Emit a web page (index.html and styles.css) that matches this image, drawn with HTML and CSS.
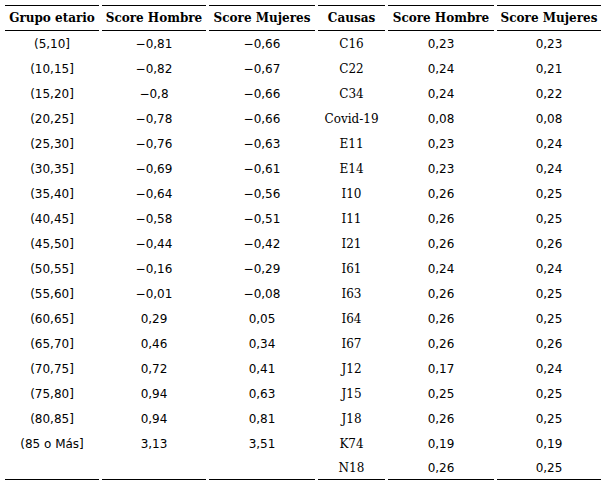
FILE: index.html
```html
<!DOCTYPE html>
<html>
<head>
<meta charset="utf-8">
<link rel="stylesheet" href="styles.css">
</head>
<body>
<table class="tbl">
<colgroup>
<col class="c1"><col class="c2"><col class="c3"><col class="c4"><col class="c5"><col class="c6">
</colgroup>
<thead>
<tr><th>Grupo etario</th><th>Score Hombre</th><th>Score Mujeres</th><th>Causas</th><th>Score Hombre</th><th>Score Mujeres</th></tr>
</thead>
<tbody>
<tr><td>(5,10]</td><td>−0,81</td><td>−0,66</td><td class="cause">C16</td><td>0,23</td><td>0,23</td></tr>
<tr><td>(10,15]</td><td>−0,82</td><td>−0,67</td><td class="cause">C22</td><td>0,24</td><td>0,21</td></tr>
<tr><td>(15,20]</td><td>−0,8</td><td>−0,66</td><td class="cause">C34</td><td>0,24</td><td>0,22</td></tr>
<tr><td>(20,25]</td><td>−0,78</td><td>−0,66</td><td class="cause">Covid-19</td><td>0,08</td><td>0,08</td></tr>
<tr><td>(25,30]</td><td>−0,76</td><td>−0,63</td><td class="cause">E11</td><td>0,23</td><td>0,24</td></tr>
<tr><td>(30,35]</td><td>−0,69</td><td>−0,61</td><td class="cause">E14</td><td>0,23</td><td>0,24</td></tr>
<tr><td>(35,40]</td><td>−0,64</td><td>−0,56</td><td class="cause">I10</td><td>0,26</td><td>0,25</td></tr>
<tr><td>(40,45]</td><td>−0,58</td><td>−0,51</td><td class="cause">I11</td><td>0,26</td><td>0,25</td></tr>
<tr><td>(45,50]</td><td>−0,44</td><td>−0,42</td><td class="cause">I21</td><td>0,26</td><td>0,26</td></tr>
<tr><td>(50,55]</td><td>−0,16</td><td>−0,29</td><td class="cause">I61</td><td>0,24</td><td>0,24</td></tr>
<tr><td>(55,60]</td><td>−0,01</td><td>−0,08</td><td class="cause">I63</td><td>0,26</td><td>0,25</td></tr>
<tr><td>(60,65]</td><td>0,29</td><td>0,05</td><td class="cause">I64</td><td>0,26</td><td>0,25</td></tr>
<tr><td>(65,70]</td><td>0,46</td><td>0,34</td><td class="cause">I67</td><td>0,26</td><td>0,26</td></tr>
<tr><td>(70,75]</td><td>0,72</td><td>0,41</td><td class="cause">J12</td><td>0,17</td><td>0,24</td></tr>
<tr><td>(75,80]</td><td>0,94</td><td>0,63</td><td class="cause">J15</td><td>0,25</td><td>0,25</td></tr>
<tr><td>(80,85]</td><td>0,94</td><td>0,81</td><td class="cause">J18</td><td>0,26</td><td>0,25</td></tr>
<tr><td>(85 o Más]</td><td>3,13</td><td>3,51</td><td class="cause">K74</td><td>0,19</td><td>0,19</td></tr>
<tr class="last"><td></td><td></td><td></td><td class="cause">N18</td><td>0,26</td><td>0,25</td></tr>
</tbody>
</table>
</body>
</html>
```

FILE: styles.css
```css
html, body {
  margin: 0;
  padding: 0;
  background: #ffffff;
}
body {
  padding: 5px 0 0 2px;
}
.tbl {
  border-collapse: separate;
  border-spacing: 3px 0;
  color: #000;
  font-family: "DejaVu Sans", Verdana, sans-serif;
  font-size: 12px;
}
.c1 { width: 94px; }
.c2 { width: 104px; }
.c3 { width: 106px; }
.c4 { width: 67px; }
.c5 { width: 106px; }
.c6 { width: 104px; }
.tbl th {
  font-family: "DejaVu Serif", "Liberation Serif", serif;
  font-weight: bold;
  font-size: 12px;
  height: 24px;
  padding: 0;
  text-align: center;
  border-top: 1px solid #000;
  border-bottom: 1px solid #000;
}
.tbl td {
  height: 25px;
  padding: 0;
  text-align: center;
  vertical-align: middle;
}
.tbl td.cause {
  font-family: "DejaVu Serif", "Liberation Serif", serif;
}
.tbl tr.last td {
  border-bottom: 1px solid #000;
  height: 23px;
}
```
